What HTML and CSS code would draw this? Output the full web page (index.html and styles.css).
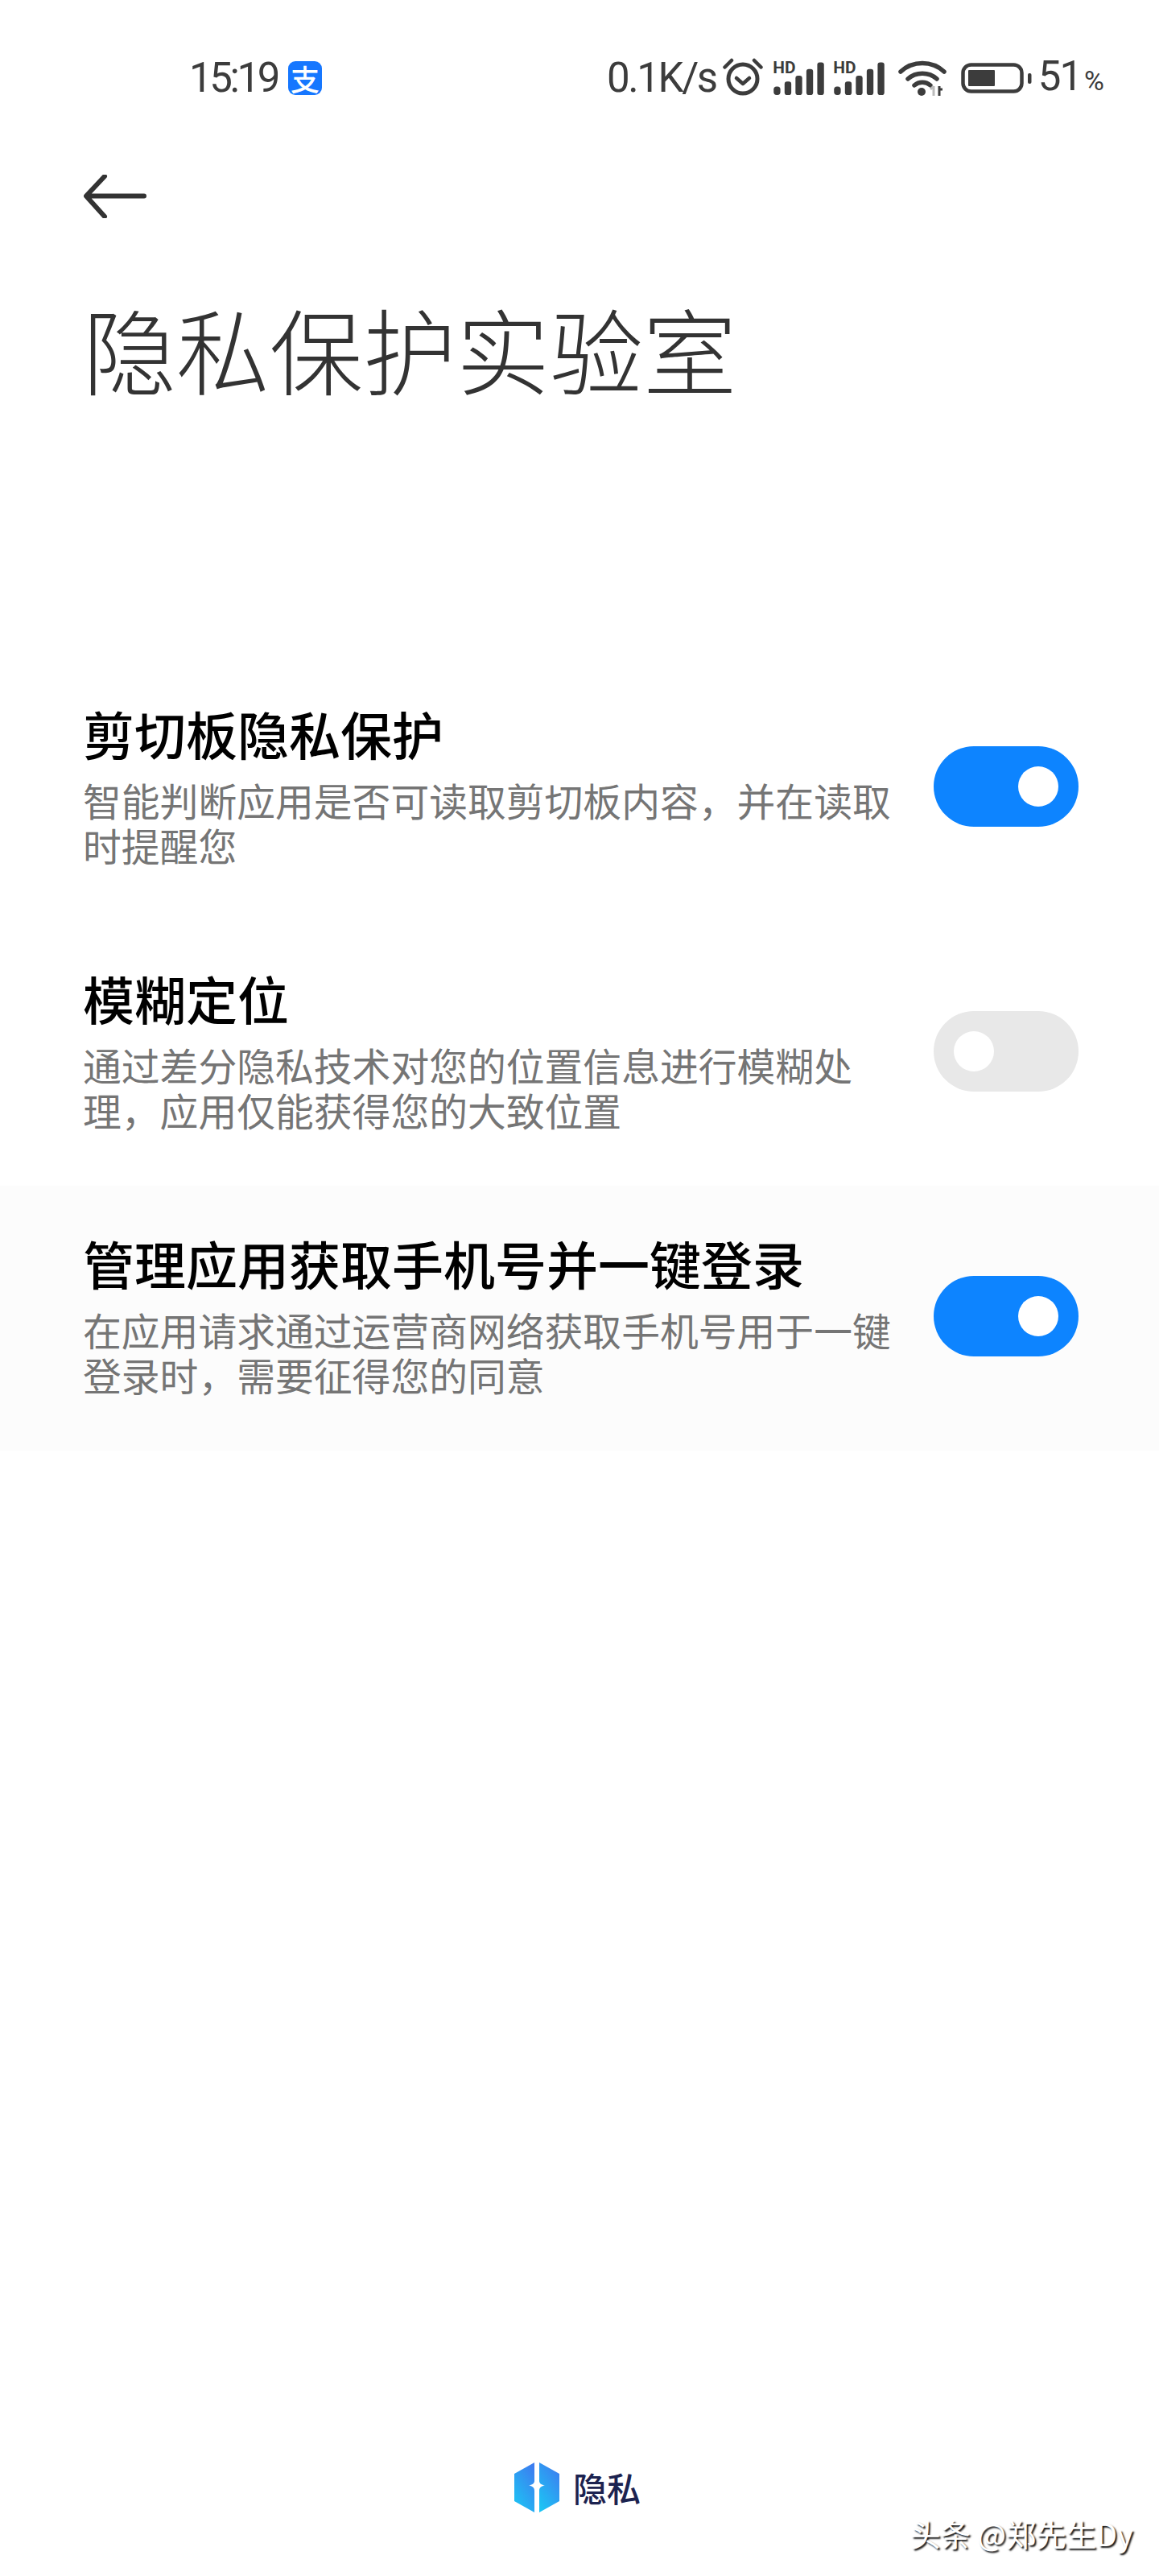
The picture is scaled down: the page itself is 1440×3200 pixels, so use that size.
FILE: index.html
```html
<!DOCTYPE html>
<html lang="zh-CN">
<head>
<meta charset="utf-8">
<title>隐私保护实验室</title>
<link rel="stylesheet" href="styles.css">
</head>
<body>
<div class="page">
  <header class="status">
    <div class="status-left">
      <span class="time">15:19</span>
      <span class="alipay">支</span>
    </div>
    <div class="status-right">
      <span class="speed">0.1K/s</span>
      <svg class="ic-alarm" width="50" height="50" viewBox="0 0 50 50"><circle cx="25" cy="28" r="18" fill="none" stroke="#3c3c3c" stroke-width="5"/><path d="M17 27l8 7 8-7" fill="none" stroke="#3c3c3c" stroke-width="4.500" stroke-linecap="round" stroke-linejoin="round"/><path d="M2.500 13.500L11 5M47.500 13.500L39 5" stroke="#3c3c3c" stroke-width="4.500" stroke-linecap="round"/></svg>
      <svg class="ic-signal" width="65" height="50" viewBox="0 -8 62 48"><text x="0" y="14" class="hd">HD</text><g fill="#3c3c3c"><rect x="1" y="30" width="8" height="10" rx="3.500"/><rect x="14" y="24" width="8" height="16" rx="3"/><rect x="27" y="17" width="8" height="23" rx="3"/><rect x="40" y="9" width="8" height="31" rx="3"/><rect x="53" y="1" width="8" height="39" rx="3"/></g></svg>
      <svg class="ic-signal second" width="65" height="50" viewBox="0 -8 62 48"><text x="0" y="14" class="hd">HD</text><g fill="#3c3c3c"><rect x="1" y="30" width="8" height="10" rx="3.500"/><rect x="14" y="24" width="8" height="16" rx="3"/><rect x="27" y="17" width="8" height="23" rx="3"/><rect x="40" y="9" width="8" height="31" rx="3"/><rect x="53" y="1" width="8" height="39" rx="3"/></g></svg>
      <svg class="ic-wifi" width="60" height="44" viewBox="0 0 60 44"><g fill="none" stroke="#3c3c3c" stroke-width="5.500" stroke-linecap="round"><path d="M3 14C18 0 42 0 57 14"/><path d="M12 23C22 14 38 14 48 23"/><path d="M20 31C26 26 34 26 40 31"/></g><circle cx="29" cy="39" r="5" fill="#3c3c3c"/><path d="M44 44V32M40 36l4-4" stroke="#bbb" stroke-width="3" fill="none"/><path d="M51 32v12M51 36h4" stroke="#3c3c3c" stroke-width="3" fill="none"/></svg>
      <svg class="ic-batt" width="88" height="38" viewBox="0 0 88 38"><rect x="2.500" y="2.500" width="73" height="33" rx="10" fill="none" stroke="#3c3c3c" stroke-width="4.500"/><rect x="9" y="9" width="33" height="20" rx="1" fill="#3c3c3c"/><rect x="83" y="13" width="4.500" height="13" rx="2" fill="#3c3c3c"/></svg>
      <span class="pct">51<small>%</small></span>
    </div>
  </header>

  <button class="back" aria-label="返回">
    <svg width="78" height="54" viewBox="0 0 78 54"><path d="M75 26.500H4M26 2L3 26.500 26 52" fill="none" stroke="#333" stroke-width="6" stroke-linecap="round" stroke-linejoin="round"/></svg>
  </button>

  <h1 class="page-title">隐私保护实验室</h1>

  <section class="list">
    <div class="row">
      <div class="row-text">
        <div class="row-title">剪切板隐私保护</div>
        <div class="row-desc">智能判断应用是否可读取剪切板内容，并在读取时提醒您</div>
      </div>
      <div class="toggle on"><span class="knob"></span></div>
    </div>
    <div class="row">
      <div class="row-text">
        <div class="row-title">模糊定位</div>
        <div class="row-desc">通过差分隐私技术对您的位置信息进行模糊处理，应用仅能获得您的大致位置</div>
      </div>
      <div class="toggle"><span class="knob"></span></div>
    </div>
    <div class="row pressed">
      <div class="row-text">
        <div class="row-title">管理应用获取手机号并一键登录</div>
        <div class="row-desc">在应用请求通过运营商网络获取手机号用于一键登录时，需要征得您的同意</div>
      </div>
      <div class="toggle on"><span class="knob"></span></div>
    </div>
  </section>

  <footer class="brand">
    <svg width="58" height="64" viewBox="0 0 58 64">
      <defs>
        <linearGradient id="g" x1="0.2" y1="1" x2="0.8" y2="0"><stop offset="0" stop-color="#1cc4f4"/><stop offset="1" stop-color="#3d7df0"/></linearGradient>
      </defs>
      <path d="M26 1V24C26 27 23 29 19 29.500 23 30 26 32 26 36V63L1 49V15Z" fill="url(#g)"/>
      <path d="M32 1V24C32 27 35 29 39 29.500 35 30 32 32 32 36V63L57 49V15Z" fill="url(#g)"/>
    </svg>
    <span class="brand-name">隐私</span>
  </footer>

  <div class="watermark">头条 @郑先生Dy</div>
</div>
</body>
</html>
```

FILE: styles.css
```css
* { box-sizing: border-box; }
html, body { margin: 0; padding: 0; background: #fff; }
body { font-family: "Noto Sans CJK SC", "Noto Sans", sans-serif; }

.page {
  position: relative;
  width: 1440px;
  height: 3200px;
  display: flex;
  flex-direction: column;
  overflow: hidden;
}

.status {
  display: flex;
  justify-content: space-between;
  align-items: center;
  height: 46px;
  margin-top: 74px;
  padding: 0 68px 0 235px;
  color: #3c3c3c;
  font-family: Roboto, sans-serif;
  font-size: 51px;
}
.status-left, .status-right { display: flex; align-items: center; }
.time { letter-spacing: -3.4px; line-height: 46px; }
.alipay {
  width: 42px;
  height: 42px;
  margin-left: 13px;
  border-radius: 9px;
  background: #1677ff;
  color: #fff;
  font: 500 36px/42px "Noto Sans CJK SC", sans-serif;
  text-align: center;
}
.speed { letter-spacing: -2.4px; line-height: 46px; }
.ic-alarm { margin-left: 8px; margin-top: -4px; }
.ic-signal { margin-left: 12px; margin-top: -8px; }
.ic-signal.second { margin-left: 10px; }
.ic-wifi { margin-left: 16px; }
.ic-batt { margin-left: 18px; }
.pct { margin-left: 8px; line-height: 46px; letter-spacing: -2px; }
.pct small { font-size: 34px; margin-left: 4px; letter-spacing: 0; }
.hd { font: 700 20px Roboto, sans-serif; fill: #3c3c3c; }

.back {
  align-self: flex-start;
  display: block;
  margin: 97px 0 0 104px;
  padding: 0;
  border: 0;
  background: none;
  line-height: 0;
}

.page-title {
  margin: 90px 0 0 103px;
  color: #333;
  font-size: 116px;
  font-weight: 300;
  line-height: 140px;
}

.list { margin-top: 314px; }

.row {
  display: flex;
  align-items: center;
  justify-content: space-between;
  height: 329px;
  padding: 59px 100px 64px 103px;
}
.row.pressed { background: #fcfcfc; }
.row-text { width: 1030px; }
.row-title {
  margin-top: -7px;
  color: #000;
  font-size: 64px;
  font-weight: 500;
  line-height: 80px;
}
.row-desc {
  margin-top: 16px;
  color: #757575;
  font-size: 47.8px;
  line-height: 56px;
}

.toggle {
  display: flex;
  align-items: center;
  justify-content: flex-start;
  flex: none;
  width: 180px;
  height: 100px;
  padding: 0 25px;
  border-radius: 50px;
  background: #e8e8e8;
}
.toggle.on { justify-content: flex-end; background: #0d84ff; }
.knob { width: 50px; height: 50px; border-radius: 50%; background: #fff; }

.brand {
  display: flex;
  align-items: center;
  gap: 16px;
  margin-top: auto;
  margin-bottom: 78px;
  padding-left: 638px;
}
.brand-name {
  color: #1c2350;
  font-size: 42px;
  font-weight: 500;
  line-height: 60px;
}

.watermark {
  position: absolute;
  left: 1131px;
  top: 3122px;
  color: #fff;
  font-size: 37.5px;
  line-height: 50px;
  white-space: nowrap;
  text-shadow: 2px 2px 2px #111;
}
```
